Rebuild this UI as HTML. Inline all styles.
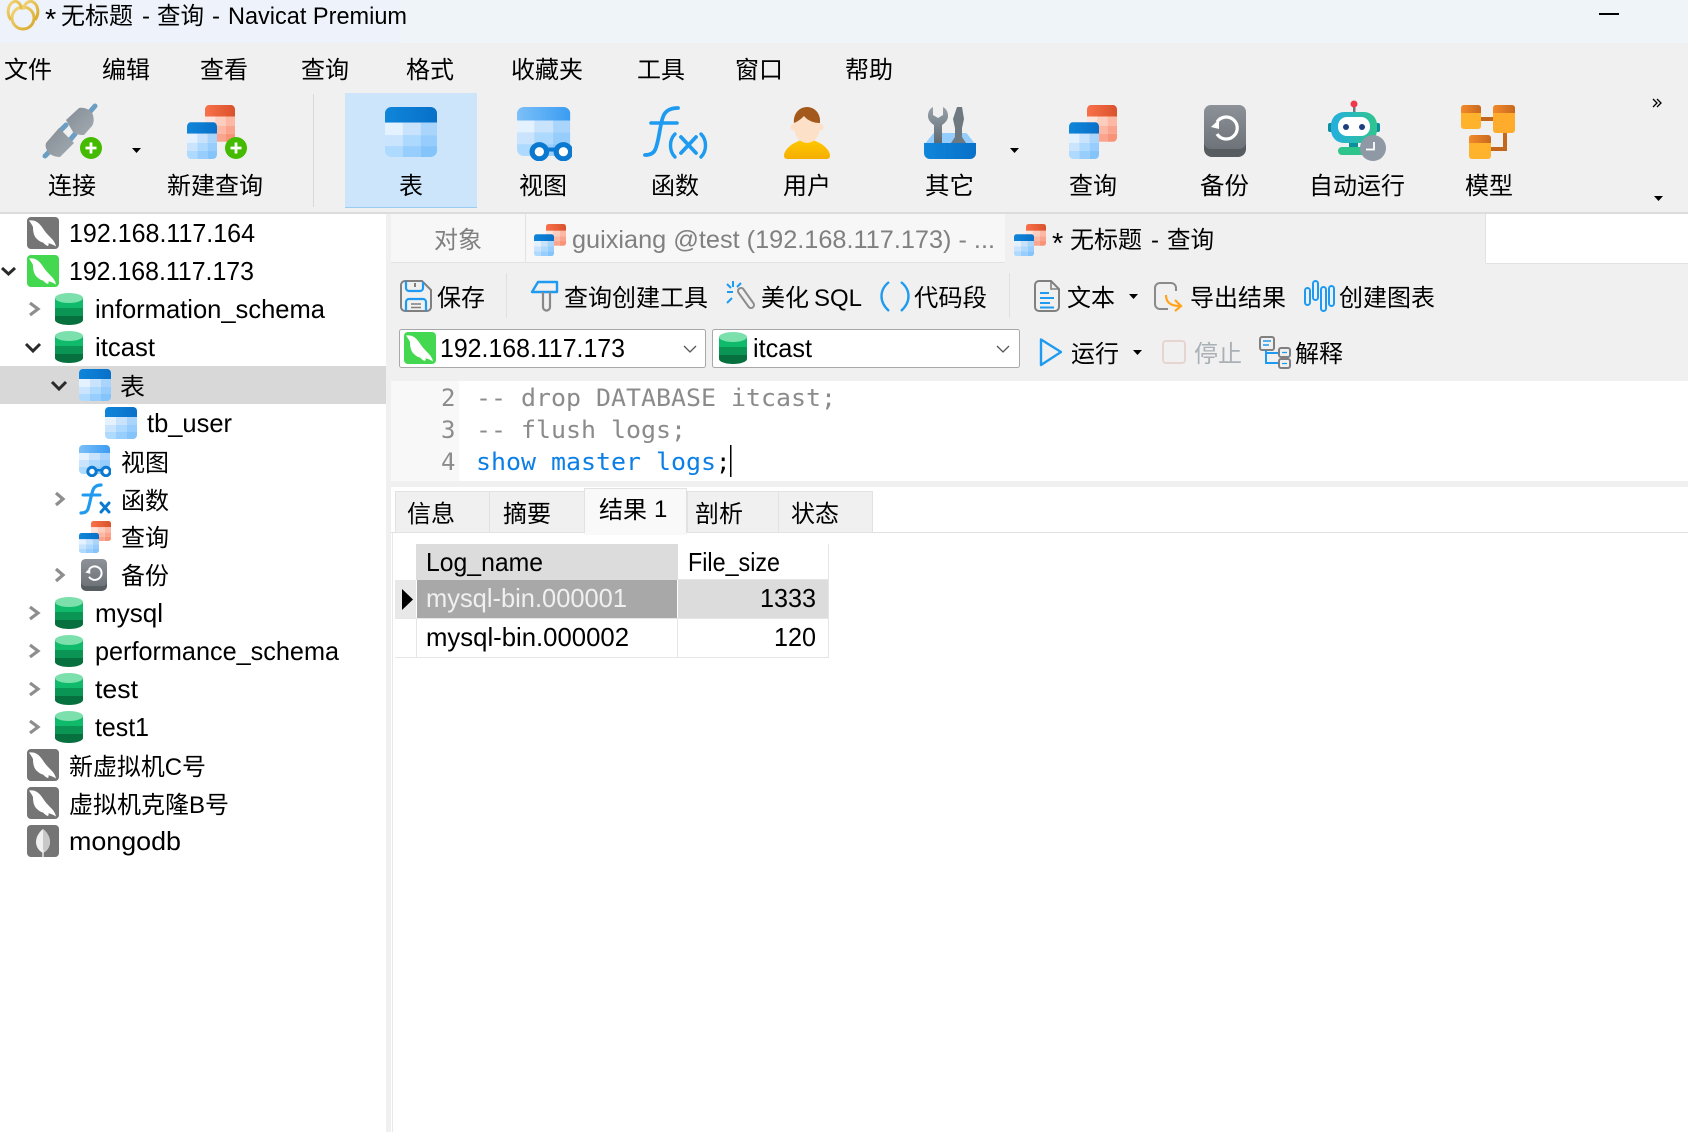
<!DOCTYPE html>
<html lang="zh">
<head>
<meta charset="utf-8">
<title>* 无标题 - 查询 - Navicat Premium</title>
<style>
html,body{margin:0;padding:0;background:#fff;width:1688px;height:1132px;overflow:hidden}
svg{display:block}
text{font-family:"Liberation Sans","Noto Sans CJK SC",sans-serif;font-size:24px;fill:#000;white-space:pre}
.l{font-size:26px}
.g{fill:#808080}
.m{font-family:"DejaVu Sans Mono","Liberation Mono",monospace;font-size:24px}
.n{font-family:"DejaVu Sans Mono","Liberation Mono",monospace;font-size:24px;fill:#8c8c8c}
.c{fill:#8b8b8b}
.k{fill:#0b7fe6}
</style>
</head>
<body>
<svg xmlns="http://www.w3.org/2000/svg" width="1688" height="1132" viewBox="0 0 1688 1132">
<defs>
<clipPath id="c32"><rect width="32" height="32" rx="4"/></clipPath>
<clipPath id="c29"><rect width="31" height="29" rx="4"/></clipPath>
<clipPath id="cdb"><path d="M0 5V27a14 5 0 0 0 28 0V5z"/></clipPath>
<linearGradient id="gb" x1="0" x2="1" y1="0" y2="0"><stop offset="0" stop-color="#0f86da"/><stop offset="1" stop-color="#0870c8"/></linearGradient>
<linearGradient id="gr" x1="0" x2="1" y1="0" y2="0"><stop offset="0" stop-color="#f9714a"/><stop offset="1" stop-color="#d9522d"/></linearGradient>
<linearGradient id="gv" x1="0" x2="1" y1="0" y2="0"><stop offset="0" stop-color="#7cc0f8"/><stop offset="1" stop-color="#3a9cf2"/></linearGradient>
<linearGradient id="gbk" x1="0" x2="0" y1="0" y2="1"><stop offset="0" stop-color="#8c9298"/><stop offset="1" stop-color="#6d7379"/></linearGradient>
<linearGradient id="grb" x1="0" x2="1" y1="0" y2="0"><stop offset="0" stop-color="#25aee0"/><stop offset="1" stop-color="#2fc58d"/></linearGradient>
<linearGradient id="gpl" x1="0" x2="1" y1="0" y2="1"><stop offset="0" stop-color="#848d95"/><stop offset="1" stop-color="#a2abb2"/></linearGradient>
<linearGradient id="gyl" x1="0" x2="0" y1="0" y2="1"><stop offset="0" stop-color="#ffc800"/><stop offset="1" stop-color="#f5ae00"/></linearGradient>
<linearGradient id="gmo" x1="0" x2="1" y1="0" y2="0"><stop offset="0" stop-color="#f38a2a"/><stop offset="1" stop-color="#c9691f"/></linearGradient>
<linearGradient id="gtl" x1="0" x2="0" y1="0" y2="1"><stop offset="0" stop-color="#98a1a9"/><stop offset="1" stop-color="#5f6a73"/></linearGradient>
<linearGradient id="glg" x1="0" x2="1" y1="0" y2="1"><stop offset="0" stop-color="#f2d77a"/><stop offset="1" stop-color="#d8a92c"/></linearGradient>

<symbol id="tb" viewBox="0 0 32 32" preserveAspectRatio="none"><g clip-path="url(#c32)">
<rect width="32" height="10" fill="url(#gb)"/>
<rect y="10" width="11" height="8" fill="#e4f1fe"/><rect x="11" y="10" width="11" height="8" fill="#c9e3fd"/><rect x="22" y="10" width="10" height="8" fill="#a9d5fd"/>
<rect y="18" width="11" height="7" fill="#cbe4fd"/><rect x="11" y="18" width="11" height="7" fill="#acd9fd"/><rect x="22" y="18" width="10" height="7" fill="#96cdfd"/>
<rect y="25" width="11" height="7" fill="#aedaff"/><rect x="11" y="25" width="11" height="7" fill="#98cefd"/><rect x="22" y="25" width="10" height="7" fill="#84c4fb"/>
</g></symbol>
<symbol id="tr" viewBox="0 0 32 32" preserveAspectRatio="none"><g clip-path="url(#c32)">
<rect width="32" height="10" fill="url(#gr)"/>
<rect y="10" width="11" height="8" fill="#fde3dc"/><rect x="11" y="10" width="11" height="8" fill="#fdcdbd"/><rect x="22" y="10" width="10" height="8" fill="#fdb8a5"/>
<rect y="18" width="11" height="7" fill="#fdcdbd"/><rect x="11" y="18" width="11" height="7" fill="#fdb8a5"/><rect x="22" y="18" width="10" height="7" fill="#fba48d"/>
<rect y="25" width="11" height="7" fill="#fdb8a5"/><rect x="11" y="25" width="11" height="7" fill="#fba48d"/><rect x="22" y="25" width="10" height="7" fill="#f99378"/>
</g></symbol>
<symbol id="vw" viewBox="0 0 32 32" preserveAspectRatio="none">
<g clip-path="url(#c29)">
<rect width="31" height="8" fill="url(#gv)"/>
<rect y="8" width="10" height="7" fill="#e4f1fe"/><rect x="10" y="8" width="11" height="7" fill="#c9e3fd"/><rect x="21" y="8" width="10" height="7" fill="#a9d5fd"/>
<rect y="15" width="10" height="7" fill="#cbe4fd"/><rect x="10" y="15" width="11" height="7" fill="#acd9fd"/><rect x="21" y="15" width="10" height="7" fill="#96cdfd"/>
<rect y="22" width="10" height="7" fill="#aedaff"/><rect x="10" y="22" width="11" height="7" fill="#98cefd"/><rect x="21" y="22" width="10" height="7" fill="#84c4fb"/>
</g>
<rect x="16" y="24" width="8" height="2.4" fill="#0b79d0"/>
<circle cx="13" cy="26.5" r="4.200" fill="#fff" stroke="#0b79d0" stroke-width="3"/>
<circle cx="27" cy="26.5" r="4.200" fill="#fff" stroke="#0b79d0" stroke-width="3"/>
</symbol>
<symbol id="q" viewBox="0 0 48 44" preserveAspectRatio="none">
<use href="#tr" x="18" y="0" width="30" height="30"/>
<use href="#tb" x="0" y="14" width="30" height="30"/>
</symbol>
<symbol id="db" viewBox="0 0 28 32">
<g clip-path="url(#cdb)">
<rect width="28" height="15" fill="#0fba6a"/><rect y="15" width="28" height="8" fill="#0a9555"/><rect y="23" width="28" height="10" fill="#06703e"/>
</g>
<ellipse cx="14" cy="5" rx="14" ry="5" fill="#7ce0ad"/>
</symbol>
<symbol id="my" viewBox="0 0 32 32">
<rect width="32" height="32" rx="4" fill="currentColor"/>
<path d="M2 3.500C5 3 8 3.500 10 5C13 7 15 10 17 13C19 16 22 19 25 22C27 24 28.500 27 29 29.500C26.500 28 24 26.800 21.500 26.300C21.800 27.500 21.500 28.500 21 29C19 28.500 17.500 27 16 25.500C13.500 25 11.500 23.500 10 22C7 19.500 6 15 6 10C5 8 3.500 5.500 2 3.500z" fill="#fff"/>
</symbol>
<symbol id="bk" viewBox="0 0 42 52" preserveAspectRatio="none">
<path d="M0 35V44a8 8 0 0 0 8 8H34a8 8 0 0 0 8-8V35z" fill="#575c61"/>
<path d="M7 0H35a7 7 0 0 1 7 7V37a7 7 0 0 1-7 7H7a7 7 0 0 1-7-7V7a7 7 0 0 1 7-7z" fill="url(#gbk)"/>
<path d="M13 17A11 11 0 1 1 13 29" fill="none" stroke="#fff" stroke-width="3.200"/>
<path d="M7 22L15 14.500V24z" fill="#fff"/>
</symbol>
</defs>

<!-- backgrounds -->
<rect width="1688" height="1132" fill="#fff"/>
<rect width="1688" height="43" fill="#eff4f9"/>
<rect width="400" height="43" fill="#eef3fb"/>
<rect y="43" width="1688" height="169" fill="#f0f0f0"/>
<rect y="212" width="1688" height="2" fill="#dcdcdc"/>

<!-- title -->
<g fill="none" stroke="url(#glg)" stroke-width="3">
<circle cx="23" cy="18" r="11"/>
<path d="M11 20C6 13 8 4 14 1.500c4-1 7 3 8 8"/>
<path d="M35 20c5-7 3-16-3-18.500-4-1-8 3-9 8"/>
</g>
<text x="45" y="29" style="font-size:29px">*</text>
<text x="61" y="24" textLength="72" lengthAdjust="spacingAndGlyphs">无标题</text>
<text x="142" y="24">-</text>
<text x="157" y="24" textLength="47" lengthAdjust="spacingAndGlyphs">查询</text>
<text x="212" y="24">-</text>
<text x="228" y="24" textLength="179" lengthAdjust="spacingAndGlyphs">Navicat Premium</text>
<rect x="1599" y="13" width="20" height="2" fill="#000"/>

<!-- menu -->
<text x="4" y="78" textLength="48" lengthAdjust="spacingAndGlyphs">文件</text>
<text x="102" y="78" textLength="48" lengthAdjust="spacingAndGlyphs">编辑</text>
<text x="200" y="78" textLength="48" lengthAdjust="spacingAndGlyphs">查看</text>
<text x="301" y="78" textLength="48" lengthAdjust="spacingAndGlyphs">查询</text>
<text x="406" y="78" textLength="48" lengthAdjust="spacingAndGlyphs">格式</text>
<text x="511" y="78" textLength="72" lengthAdjust="spacingAndGlyphs">收藏夹</text>
<text x="637" y="78" textLength="48" lengthAdjust="spacingAndGlyphs">工具</text>
<text x="735" y="78" textLength="48" lengthAdjust="spacingAndGlyphs">窗口</text>
<text x="845" y="78" textLength="48" lengthAdjust="spacingAndGlyphs">帮助</text>

<!-- toolbar -->
<rect x="313" y="94" width="1" height="113" fill="#d8d8d8"/>
<rect x="345" y="93" width="132" height="115" fill="#cce5fb"/>
<rect x="345" y="207" width="132" height="1" fill="#99ccf3"/>

<!-- plug -->
<g stroke="#6b9ec2" stroke-width="5" stroke-linecap="round" fill="none">
<path d="M88 114L95 106"/><path d="M45 156L50 151"/><path d="M60 131L66 125"/><path d="M70 140L75 134"/>
</g>
<path d="M66 120L79 108c6-1 12 2 14 7 1 4 1 8-1 11l-8 9c-5 0-9-1-11-3z" fill="url(#gpl)"/>
<path d="M59 128L74 143L60 157c-5 0-10-2-12-5-2-3-3-6-2-9z" fill="url(#gpl)"/>
<circle cx="91" cy="148" r="11" fill="#44bb00"/><path d="M91 142.500v11M85.500 148h11" stroke="#fff" stroke-width="2.800"/>
<path d="M132 148h9l-4.500 5z" fill="#000"/>
<text x="48" y="194" textLength="48" lengthAdjust="spacingAndGlyphs">连接</text>

<!-- new query -->
<use href="#q" x="187" y="105" width="48" height="54"/>
<circle cx="236" cy="148" r="11" fill="#44bb00"/><path d="M236 142.500v11M230.500 148h11" stroke="#fff" stroke-width="2.800"/>
<text x="167" y="194" textLength="96" lengthAdjust="spacingAndGlyphs">新建查询</text>

<use href="#tb" x="385" y="107" width="52" height="50"/>
<text x="399" y="194" textLength="24" lengthAdjust="spacingAndGlyphs">表</text>

<use href="#vw" x="517" y="107" width="55" height="54"/>
<text x="519" y="194" textLength="48" lengthAdjust="spacingAndGlyphs">视图</text>

<!-- f(x) -->
<g fill="none" stroke="#1e9bf0" stroke-linecap="round">
<path d="M645 155c4 0 8-1 10-5 4-8 5-26 8-33 2-6 7-9 15-9" stroke-width="3.800"/>
<path d="M651 123H677" stroke-width="3.600"/>
<path d="M675 134c-6 6-6 17 0 23" stroke-width="3.400"/>
<path d="M681 137L696 153M696 137L681 153" stroke-width="3.800"/>
<path d="M701 134c6 6 6 17 0 23" stroke-width="3.400"/>
</g>
<text x="651" y="194" textLength="48" lengthAdjust="spacingAndGlyphs">函数</text>

<!-- user -->
<path d="M784 155c1-7 10-13 18-15h10c8 2 17 8 18 15 0 3-1 4-4 4H788c-3 0-4-1-4-4z" fill="url(#gyl)"/>
<circle cx="794" cy="127" r="3.500" fill="#fde0c8"/><circle cx="820" cy="127" r="3.500" fill="#fde0c8"/>
<ellipse cx="807" cy="127" rx="13" ry="16" fill="#fde0c8"/>
<path d="M794 123c-1-9 5-16 13-16s14 7 13 16c-6 0-12-2-16-7-2 2-5 5-10 7z" fill="#a3591c"/>
<text x="783" y="194" textLength="48" lengthAdjust="spacingAndGlyphs">用户</text>

<!-- tools -->
<path d="M924 145l8-10c1-2 3-2 4-2h28c2 0 3 0 4 2l8 10z" fill="#94cdfb"/>
<path d="M924 143H976V153a6 6 0 0 1-6 6H930a6 6 0 0 1-6-6z" fill="url(#gb)"/>
<path d="M933 107c-4 2-5 6-5 9 0 4 3 7 6 9v18h8V125c3-2 6-5 6-9 0-3-1-7-5-9v8l-5 3-5-3z" fill="url(#gtl)"/>
<path d="M957 107h5l2 12-2 9v9l4 6h-15l4-6v-9l-2-9z" fill="#6d7880"/>
<path d="M1010 148h9l-4.500 5z" fill="#000"/>
<text x="925" y="194" textLength="49" lengthAdjust="spacingAndGlyphs">其它</text>

<use href="#q" x="1069" y="105" width="48" height="54"/>
<text x="1069" y="194" textLength="48" lengthAdjust="spacingAndGlyphs">查询</text>

<use href="#bk" x="1204" y="105" width="42" height="52"/>
<text x="1200" y="194" textLength="49" lengthAdjust="spacingAndGlyphs">备份</text>

<!-- robot -->
<rect x="1353" y="106" width="2.500" height="7" fill="#6b7680"/>
<circle cx="1354" cy="104" r="3.500" fill="#ee3b4b"/>
<rect x="1328" y="123" width="52" height="9" rx="2" fill="#0b8f9b"/>
<rect x="1331" y="112" width="46" height="31" rx="13" fill="url(#grb)"/>
<rect x="1338" y="117" width="32" height="19" rx="9" fill="#fff"/>
<circle cx="1346" cy="127" r="3" fill="#1d3f80"/><circle cx="1362" cy="127" r="3" fill="#1d3f80"/>
<rect x="1349" y="143" width="9" height="5" fill="#0b8f9b"/>
<rect x="1338" y="147" width="30" height="8" rx="4" fill="#30c48d"/>
<circle cx="1373" cy="148" r="13" fill="#8e99a5"/>
<path d="M1374 142v7.500h-8" fill="none" stroke="#fff" stroke-width="1.800"/>
<text x="1309" y="194" textLength="96" lengthAdjust="spacingAndGlyphs">自动运行</text>

<!-- model -->
<path d="M1481 117h12v4h-12zM1503 133h4v18h-16v-4h12z" fill="#c4671e"/>
<g>
<rect x="1461" y="105" width="20" height="24" rx="3" fill="#ffb22c"/><path d="M1461 113v-5a3 3 0 0 1 3-3h14a3 3 0 0 1 3 3v5z" fill="url(#gmo)"/>
<rect x="1493" y="105" width="22" height="28" rx="3" fill="#ffac2c"/><path d="M1493 113v-5a3 3 0 0 1 3-3h16a3 3 0 0 1 3 3v5z" fill="url(#gmo)"/>
<rect x="1469" y="135" width="22" height="24" rx="3" fill="#ffb22c"/><path d="M1469 143v-5a3 3 0 0 1 3-3h16a3 3 0 0 1 3 3v5z" fill="url(#gmo)"/>
</g>
<text x="1465" y="194" textLength="48" lengthAdjust="spacingAndGlyphs">模型</text>

<path d="M1653 99l4 4-4 4M1657 99l4 4-4 4" fill="none" stroke="#000" stroke-width="1.300"/>
<path d="M1654 196h9l-4.500 5z" fill="#000"/>

<!-- splitter -->
<rect x="386" y="214" width="5" height="918" fill="#f0f0f0"/>

<!-- tabs -->
<rect x="391" y="214" width="1297" height="49" fill="#fff"/>
<rect x="391" y="214" width="134" height="49" fill="#f7f7f7"/>
<rect x="525" y="214" width="480" height="49" fill="#f7f7f7"/>
<rect x="525" y="214" width="1" height="49" fill="#e2e2e2"/>
<rect x="1005" y="214" width="480" height="49" fill="#f0f0f0"/>
<rect x="1485" y="214" width="1" height="49" fill="#e2e2e2"/>
<rect x="1486" y="263" width="202" height="1" fill="#e2e2e2"/>
<rect x="391" y="262" width="614" height="1" fill="#e2e2e2"/>
<text class="g" x="434" y="248" textLength="48" lengthAdjust="spacingAndGlyphs">对象</text>
<use href="#q" x="534" y="224" width="32" height="32"/>
<text class="g" x="572" y="248" style="font-size:25px" textLength="423" lengthAdjust="spacingAndGlyphs">guixiang @test (192.168.117.173) - ...</text>
<use href="#q" x="1014" y="224" width="32" height="32"/>
<text x="1052" y="253" style="font-size:29px">*</text>
<text x="1070" y="248" textLength="72" lengthAdjust="spacingAndGlyphs">无标题</text>
<text x="1151" y="248">-</text>
<text x="1167" y="248" textLength="47" lengthAdjust="spacingAndGlyphs">查询</text>

<!-- second toolbar -->
<rect x="391" y="263" width="1297" height="118" fill="#f0f0f0"/>
<rect x="1486" y="263" width="202" height="1" fill="#e2e2e2"/>
<rect x="506" y="273" width="1" height="45" fill="#e0e0e0"/>
<rect x="1009" y="273" width="1" height="45" fill="#e0e0e0"/>

<!-- save -->
<path d="M405 281H422L431 290V307a4 4 0 0 1-4 4H405a4 4 0 0 1-4-4V285a4 4 0 0 1 4-4z" fill="none" stroke="#808080" stroke-width="2"/>
<path d="M406 281V288a3 3 0 0 0 3 3H420a3 3 0 0 0 3-3V282" fill="none" stroke="#1e9bf0" stroke-width="2.200"/>
<rect x="414" y="283" width="2" height="4" fill="#808080"/>
<path d="M406 311V302a3 3 0 0 1 3-3H423a3 3 0 0 1 3 3V311" fill="none" stroke="#1e9bf0" stroke-width="2.200"/>
<path d="M411 304H421M411 307.500H421" stroke="#808080" stroke-width="1.500"/>
<text x="437" y="306" textLength="48" lengthAdjust="spacingAndGlyphs">保存</text>

<!-- builder -->
<path d="M532 292L538 282H557V292z" fill="none" stroke="#1e9bf0" stroke-width="2.400" stroke-linejoin="round"/>
<path d="M543 292V307a3.500 3.500 0 0 0 7 0V292" fill="none" stroke="#888" stroke-width="2.200"/>
<text x="564" y="306" textLength="144" lengthAdjust="spacingAndGlyphs">查询创建工具</text>

<!-- beautify -->
<path d="M741 291L751 305" stroke="#8d8d8d" stroke-width="8" stroke-linecap="round"/>
<path d="M741 291L751 305" stroke="#f0f0f0" stroke-width="4" stroke-linecap="round"/>
<path d="M727 292H733M733 281V287M727 284L731 288M741 283L737 287M727 303L732 298" stroke="#1e9bf0" stroke-width="2"/>
<text x="761" y="306" textLength="48" lengthAdjust="spacingAndGlyphs">美化</text>
<text x="814" y="306" textLength="48" lengthAdjust="spacingAndGlyphs">SQL</text>

<!-- parens -->
<path d="M889 282c-10 8-10 20 0 29M901 282c10 8 10 20 0 29" fill="none" stroke="#1e9bf0" stroke-width="2.400"/>
<text x="914" y="306" textLength="73" lengthAdjust="spacingAndGlyphs">代码段</text>

<!-- doc -->
<path d="M1039 281H1051L1059 289V307a4 4 0 0 1-4 4H1039a4 4 0 0 1-4-4V285a4 4 0 0 1 4-4z" fill="none" stroke="#808080" stroke-width="2"/>
<path d="M1051 281V289H1059" fill="none" stroke="#808080" stroke-width="1.600"/>
<path d="M1040 293H1049M1040 298H1054M1040 303H1050M1040 307.500H1054" stroke="#1e9bf0" stroke-width="2"/>
<text x="1067" y="306" textLength="48" lengthAdjust="spacingAndGlyphs">文本</text>
<path d="M1129 294h9l-4.500 5z" fill="#000"/>

<!-- export -->
<path d="M1168 309H1160a5 5 0 0 1-5-5V288a5 5 0 0 1 5-5H1171a5 5 0 0 1 5 5V291" fill="none" stroke="#8a8a8a" stroke-width="2"/>
<path d="M1166 295C1166 302 1170 306 1180 306M1175 300L1181 306L1175 311" fill="none" stroke="#ffa41c" stroke-width="2.200"/>
<text x="1190" y="306" textLength="96" lengthAdjust="spacingAndGlyphs">导出结果</text>

<!-- chart -->
<g fill="none" stroke="#1e9bf0" stroke-width="2"><rect x="1305" y="288" width="5" height="17" rx="2.500"/><rect x="1313" y="281" width="5" height="19" rx="2.500"/><rect x="1321" y="287" width="5" height="24" rx="2.500"/><rect x="1329" y="286" width="5" height="20" rx="2.500"/></g>
<text x="1339" y="306" textLength="96" lengthAdjust="spacingAndGlyphs">创建图表</text>

<!-- combos -->
<rect x="399.500" y="329.500" width="306" height="38" rx="2" fill="#fff" stroke="#a8a8a8"/>
<rect x="712.500" y="329.500" width="307" height="38" rx="2" fill="#fff" stroke="#a8a8a8"/>
<use href="#my" x="404" y="332" width="32" height="32" style="color:#44d850"/>
<text class="l" x="440" y="357" textLength="185" lengthAdjust="spacingAndGlyphs">192.168.117.173</text>
<path d="M684 346L690 352L696 346" fill="none" stroke="#555" stroke-width="1.300"/>
<use href="#db" x="719" y="332" width="28" height="32"/>
<text class="l" x="753" y="357" textLength="59" lengthAdjust="spacingAndGlyphs">itcast</text>
<path d="M997 346L1003 352L1009 346" fill="none" stroke="#555" stroke-width="1.300"/>

<!-- run bar -->
<path d="M1041 339.500L1061 352L1041 365z" fill="none" stroke="#1e9bf0" stroke-width="2.400" stroke-linejoin="round"/>
<text x="1071" y="362" textLength="48" lengthAdjust="spacingAndGlyphs">运行</text>
<path d="M1133 350h9l-4.500 5z" fill="#000"/>
<rect x="1163" y="341" width="22" height="22" rx="3" fill="none" stroke="#e7d5d2" stroke-width="2"/>
<text x="1194" y="362" style="fill:#a9b0b6" textLength="48" lengthAdjust="spacingAndGlyphs">停止</text>
<rect x="1260" y="337" width="14" height="13" rx="2" fill="none" stroke="#808080" stroke-width="2"/>
<path d="M1263 341H1271M1263 345H1269" stroke="#1e9bf0" stroke-width="1.500"/>
<path d="M1266 350V363H1279M1266 353H1279" fill="none" stroke="#1e9bf0" stroke-width="2"/>
<rect x="1279" y="348" width="11" height="9" rx="2" fill="none" stroke="#808080" stroke-width="2"/>
<rect x="1279" y="359" width="11" height="9" rx="2" fill="none" stroke="#808080" stroke-width="2"/>
<path d="M1282 352.500h5M1282 363.500h5" stroke="#1e9bf0" stroke-width="1.300"/>
<text x="1295" y="362" textLength="48" lengthAdjust="spacingAndGlyphs">解释</text>

<!-- editor -->
<rect x="391" y="381" width="1297" height="100" fill="#fff"/>
<rect x="391" y="381" width="68" height="100" fill="#f8f8f8"/>
<rect x="391" y="481" width="1297" height="6" fill="#f0f0f0"/>
<text class="n" x="441" y="406">2</text>
<text class="n" x="441" y="438">3</text>
<text class="n" x="441" y="470">4</text>
<text class="m c" x="476" y="406" textLength="360" lengthAdjust="spacingAndGlyphs">-- drop DATABASE itcast;</text>
<text class="m c" x="476" y="438" textLength="210" lengthAdjust="spacingAndGlyphs">-- flush logs;</text>
<text class="m k" x="476" y="470" textLength="240" lengthAdjust="spacingAndGlyphs">show master logs</text>
<text class="m" x="716" y="470">;</text>
<rect x="730" y="445" width="1.500" height="32" fill="#000"/>

<!-- result tabs -->
<rect x="391" y="532" width="1297" height="1" fill="#e0e0e0"/>
<rect x="395.500" y="491.500" width="94" height="41" fill="#f0f0f0" stroke="#e2e2e2"/>
<rect x="489.500" y="491.500" width="95" height="41" fill="#f0f0f0" stroke="#e2e2e2"/>
<rect x="687.500" y="491.500" width="91" height="41" fill="#f0f0f0" stroke="#e2e2e2"/>
<rect x="778.500" y="491.500" width="94" height="41" fill="#f0f0f0" stroke="#e2e2e2"/>
<rect x="584" y="488" width="103" height="47" fill="#f9f9f9"/>
<path d="M584.500 533V488.500H686.500V533" fill="none" stroke="#e2e2e2"/>
<text x="407" y="522" textLength="48" lengthAdjust="spacingAndGlyphs">信息</text>
<text x="503" y="522" textLength="48" lengthAdjust="spacingAndGlyphs">摘要</text>
<text x="599" y="518" textLength="48" lengthAdjust="spacingAndGlyphs">结果</text>
<text x="654" y="517">1</text>
<text x="695" y="522" textLength="48" lengthAdjust="spacingAndGlyphs">剖析</text>
<text x="791" y="522" textLength="48" lengthAdjust="spacingAndGlyphs">状态</text>
<rect x="392" y="533" width="1" height="599" fill="#e8e8e8"/>

<!-- grid -->
<rect x="416" y="544" width="262" height="36" fill="#dcdcdc"/>
<rect x="395" y="580" width="21" height="38" fill="#e8e8e8"/>
<rect x="417" y="580" width="260" height="38" fill="#a8a8a8"/>
<rect x="678" y="580" width="150" height="38" fill="#dcdcdc"/>
<path d="M402 589L413 599.500L402 610z" fill="#000"/>
<g fill="none" stroke="#e6e6e6">
<path d="M828.500 544V657.500H395"/>
<path d="M416.500 618V657"/><path d="M677.500 618V657"/>
<path d="M395 618.500H828"/><path d="M678 579.500H828"/>
</g>
<text class="l" x="426" y="571" textLength="117" lengthAdjust="spacingAndGlyphs">Log_name</text>
<text class="l" x="688" y="571" textLength="92" lengthAdjust="spacingAndGlyphs">File_size</text>
<text class="l" x="426" y="607" style="fill:#f0f0f0" textLength="201" lengthAdjust="spacingAndGlyphs">mysql-bin.000001</text>
<text class="l" x="760" y="607" textLength="56" lengthAdjust="spacingAndGlyphs">1333</text>
<text class="l" x="426" y="646" textLength="203" lengthAdjust="spacingAndGlyphs">mysql-bin.000002</text>
<text class="l" x="774" y="646" textLength="42" lengthAdjust="spacingAndGlyphs">120</text>

<!-- tree -->
<rect x="0" y="366" width="386" height="38" fill="#d8d8d8"/>
<g fill="none" stroke="#8e8e8e" stroke-width="3.200">
<path d="M30 303L38 309L30 315" stroke-width="3.200"/>
<path d="M56 493L63 499L56 505"/>
<path d="M56 569L63 575L56 581"/>
<path d="M30 607L38 613L30 619"/>
<path d="M30 645L38 651L30 657"/>
<path d="M30 683L38 689L30 695"/>
<path d="M30 721L38 727L30 733"/>
</g>
<g fill="none" stroke="#2a2a2a" stroke-width="3">
<path d="M2 268L8.500 274L15 268"/>
<path d="M26 344L33 351L40 344"/>
<path d="M52 382L59 389L66 382"/>
</g>
<use href="#my" x="27" y="217" width="32" height="32" style="color:#757575"/>
<text class="l" x="69" y="242" textLength="186" lengthAdjust="spacingAndGlyphs">192.168.117.164</text>
<use href="#my" x="27" y="255" width="32" height="32" style="color:#44d850"/>
<text class="l" x="69" y="280" textLength="185" lengthAdjust="spacingAndGlyphs">192.168.117.173</text>
<use href="#db" x="55" y="293" width="28" height="32"/>
<text class="l" x="95" y="318" textLength="230" lengthAdjust="spacingAndGlyphs">information_schema</text>
<use href="#db" x="55" y="331" width="28" height="32"/>
<text class="l" x="95" y="356" textLength="60" lengthAdjust="spacingAndGlyphs">itcast</text>
<use href="#tb" x="79" y="369" width="32" height="32"/>
<text x="120" y="395" textLength="25" lengthAdjust="spacingAndGlyphs">表</text>
<use href="#tb" x="105" y="407" width="32" height="32"/>
<text class="l" x="147" y="432" textLength="85" lengthAdjust="spacingAndGlyphs">tb_user</text>
<use href="#vw" x="79" y="445" width="32" height="32"/>
<text x="121" y="471" textLength="48" lengthAdjust="spacingAndGlyphs">视图</text>
<g fill="none" stroke="#1e9bf0" stroke-linecap="round">
<path d="M81 513c3 0 6-1 7-4 2-6 3-14 5-19 1-3 4-5 8-5" stroke-width="3.200"/>
<path d="M83 495H100" stroke-width="3"/>
<path d="M101 503L109 512M109 503L101 512" stroke="#0b79d0" stroke-width="3"/>
</g>
<text x="121" y="509" textLength="48" lengthAdjust="spacingAndGlyphs">函数</text>
<use href="#tr" x="91" y="521" width="20" height="20"/>
<use href="#tb" x="79" y="533" width="20" height="20"/>
<text x="121" y="546" textLength="48" lengthAdjust="spacingAndGlyphs">查询</text>
<use href="#bk" x="81" y="559" width="26" height="32"/>
<text x="121" y="584" textLength="48" lengthAdjust="spacingAndGlyphs">备份</text>
<use href="#db" x="55" y="597" width="28" height="32"/>
<text class="l" x="95" y="622" textLength="68" lengthAdjust="spacingAndGlyphs">mysql</text>
<use href="#db" x="55" y="635" width="28" height="32"/>
<text class="l" x="95" y="660" textLength="244" lengthAdjust="spacingAndGlyphs">performance_schema</text>
<use href="#db" x="55" y="673" width="28" height="32"/>
<text class="l" x="95" y="698" textLength="43" lengthAdjust="spacingAndGlyphs">test</text>
<use href="#db" x="55" y="711" width="28" height="32"/>
<text class="l" x="95" y="736" textLength="54" lengthAdjust="spacingAndGlyphs">test1</text>
<use href="#my" x="27" y="749" width="32" height="32" style="color:#757575"/>
<text x="69" y="775" textLength="137" lengthAdjust="spacingAndGlyphs">新虚拟机C号</text>
<use href="#my" x="27" y="787" width="32" height="32" style="color:#757575"/>
<text x="69" y="813" textLength="160" lengthAdjust="spacingAndGlyphs">虚拟机克隆B号</text>
<rect x="27" y="825" width="32" height="32" rx="4" fill="#757575"/>
<path d="M43 829c5 4 7 9 7 13 0 5-3 9-7 11-4-2-7-6-7-11 0-4 2-9 7-13z" fill="#f0f0f0"/>
<path d="M43 829c5 4 7 9 7 13 0 5-3 9-7 11z" fill="#c8c8c8"/>
<path d="M43 850v7" stroke="#f0f0f0" stroke-width="1.400"/>
<text class="l" x="69" y="850" textLength="112" lengthAdjust="spacingAndGlyphs">mongodb</text>
</svg>
</body>
</html>
